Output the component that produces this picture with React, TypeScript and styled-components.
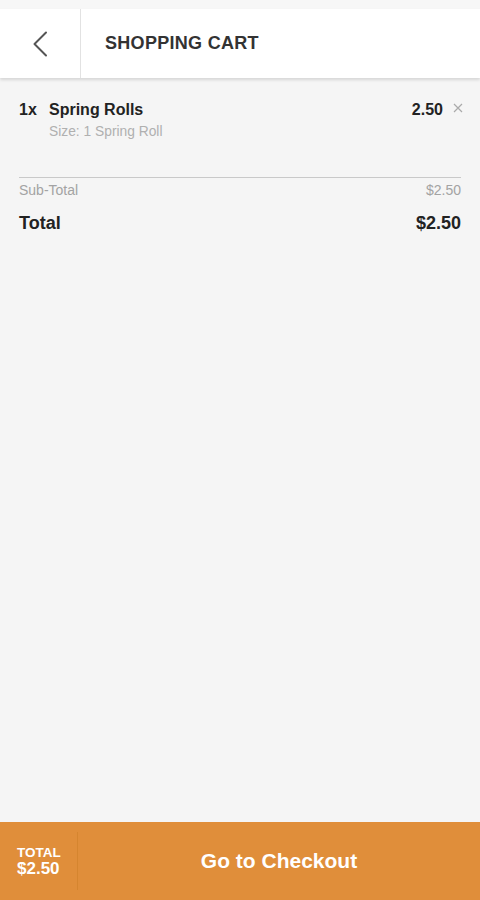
import React from 'react';
import styled, { createGlobalStyle } from 'styled-components';

const GlobalStyle = createGlobalStyle`
  html, body {
    margin: 0;
    padding: 0;
    background: #f5f5f5;
    font-family: "Liberation Sans", Arial, sans-serif;
  }
`;

const Screen = styled.div`
  width: 480px;
  height: 900px;
  display: flex;
  flex-direction: column;
  background: #f5f5f5;
`;

const TopStrip = styled.div`
  height: 9px;
  background: #f7f7f7;
`;

const Header = styled.div`
  display: flex;
  height: 69px;
  background: #fff;
  box-shadow: 0 2px 3px rgba(0, 0, 0, 0.13);
  position: relative;
  z-index: 1;
`;

const BackButton = styled.div`
  width: 80px;
  display: flex;
  align-items: center;
  justify-content: center;
  border-right: 1px solid #e2e2e2;
`;

const Title = styled.div`
  display: flex;
  align-items: center;
  padding-left: 24px;
  font-size: 18px;
  font-weight: 700;
  color: #333;
  letter-spacing: 0.3px;
`;

const Content = styled.div`
  flex: 1;
  padding: 0 19px;
`;

const ItemRow = styled.div`
  display: flex;
  padding-top: 22px;
`;

const Qty = styled.div`
  width: 30px;
  font-size: 16px;
  font-weight: 700;
  color: #222;
  line-height: 19px;
`;

const ItemInfo = styled.div`
  flex: 1;
`;

const ItemName = styled.div`
  font-size: 16px;
  font-weight: 700;
  color: #222;
  line-height: 19px;
`;

const ItemOption = styled.div`
  margin-top: 5px;
  font-size: 13.8px;
  color: #b0b0b0;
  line-height: 16px;
`;

const ItemPrice = styled.div`
  font-size: 16px;
  font-weight: 700;
  color: #222;
  line-height: 19px;
`;

const Remove = styled.div`
  width: 20px;
  display: flex;
  justify-content: flex-end;
  padding-top: 3px;
  margin-right: -2px;
`;

const Divider = styled.div`
  margin-top: 37px;
  border-top: 1px solid #c9c9c9;
`;

const SumRow = styled.div<{ $big?: boolean }>`
  display: flex;
  justify-content: space-between;
  margin-top: ${p => (p.$big ? '15px' : '4px')};
  font-size: ${p => (p.$big ? '18px' : '14px')};
  font-weight: ${p => (p.$big ? 700 : 400)};
  color: ${p => (p.$big ? '#222' : '#a3a3a3')};
  line-height: ${p => (p.$big ? '21px' : '16px')};
`;

const Footer = styled.div`
  height: 78px;
  display: flex;
  background: #e08e3a;
  color: #fff;
`;

const FooterTotal = styled.div`
  width: 78px;
  box-sizing: border-box;
  padding-left: 17px;
  display: flex;
  flex-direction: column;
  justify-content: center;
  border-right: 1px solid #d5852f;
  margin: 10px 0;
  padding-top: 1px;
`;

const FooterLabel = styled.div`
  font-size: 13.5px;
  font-weight: 700;
  line-height: 15px;
`;

const FooterAmount = styled.div`
  font-size: 17px;
  font-weight: 700;
  line-height: 18px;
`;

const CheckoutButton = styled.div`
  flex: 1;
  display: flex;
  align-items: center;
  justify-content: center;
  font-size: 21px;
  font-weight: 700;
  padding-bottom: 1px;
`;

export default function App() {
  return (
    <Screen>
      <GlobalStyle />
      <TopStrip />
      <Header>
        <BackButton>
          <svg width="16" height="26" viewBox="0 0 16 26" fill="none">
            <path d="M14 1.5 L2.5 13 L14 24.5" stroke="#555" strokeWidth="2" strokeLinecap="round" strokeLinejoin="round" />
          </svg>
        </BackButton>
        <Title>SHOPPING CART</Title>
      </Header>
      <Content>
        <ItemRow>
          <Qty>1x</Qty>
          <ItemInfo>
            <ItemName>Spring Rolls</ItemName>
            <ItemOption>Size: 1 Spring Roll</ItemOption>
          </ItemInfo>
          <ItemPrice>2.50</ItemPrice>
          <Remove>
            <svg width="10" height="10" viewBox="0 0 10 10">
              <path d="M1 1 L9 9 M9 1 L1 9" stroke="#aaa" strokeWidth="1.2" />
            </svg>
          </Remove>
        </ItemRow>
        <Divider />
        <SumRow>
          <span>Sub-Total</span>
          <span>$2.50</span>
        </SumRow>
        <SumRow $big>
          <span>Total</span>
          <span>$2.50</span>
        </SumRow>
      </Content>
      <Footer>
        <FooterTotal>
          <FooterLabel>TOTAL</FooterLabel>
          <FooterAmount>$2.50</FooterAmount>
        </FooterTotal>
        <CheckoutButton>Go to Checkout</CheckoutButton>
      </Footer>
    </Screen>
  );
}
